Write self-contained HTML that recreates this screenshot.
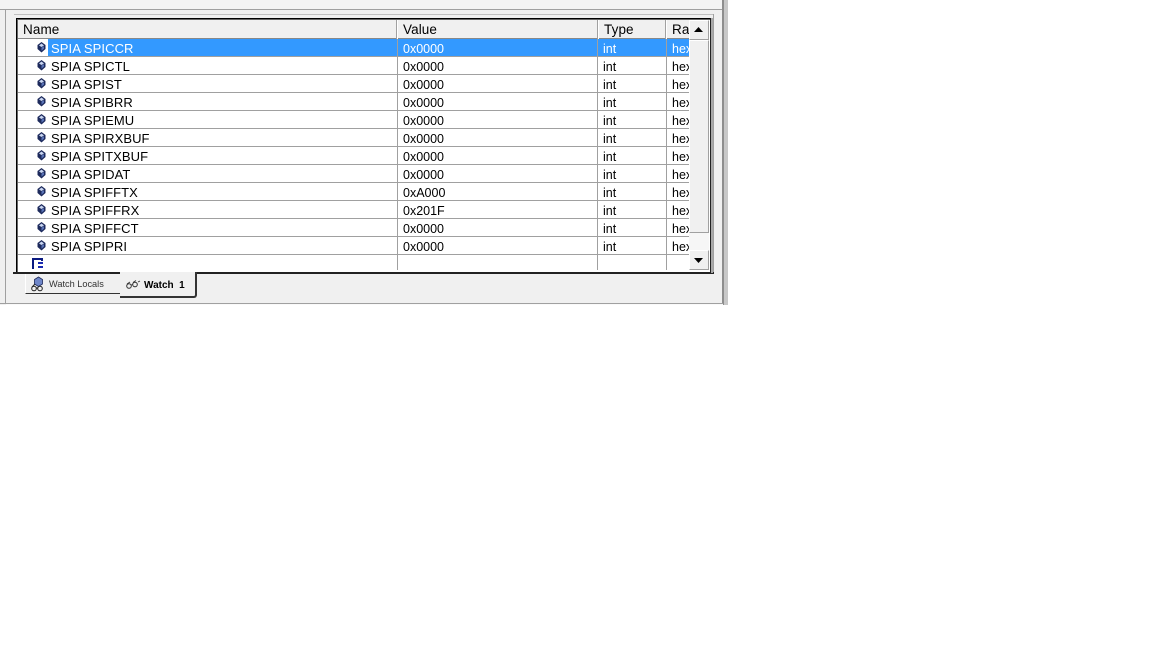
<!DOCTYPE html>
<html><head><meta charset="utf-8">
<style>
html,body{margin:0;padding:0;background:#fff;width:1152px;height:648px;overflow:hidden}
body{position:relative;font-family:"Liberation Sans",sans-serif}
div{position:absolute;box-sizing:border-box}
.t{font-size:13px;line-height:16px;color:#000;white-space:nowrap}
.hd{font-size:13.500px;letter-spacing:.1px}
.n{left:51px;letter-spacing:.08px}
.a{left:403px;font-size:12.5px}
.b{left:603px;font-size:12.5px}
.c{left:672px;font-size:12.5px;width:17px;overflow:hidden}
.w{color:#fff}
.h{height:1px;background:#a0a0a0;left:18px;width:671px}
.v{width:1px;background:#a0a0a0;top:39px;height:231px}
.btn{background:#f0f0f0;border-right:1px solid #a0a0a0;border-bottom:1px solid #a0a0a0;border-top:1px solid #fff;border-left:1px solid #fff}
svg{position:absolute}
</style></head><body>
<div style="left:0;top:0;width:723px;height:305px;background:#f0f0f0"></div>
<div style="left:0;top:0;width:723px;height:9px;background:#f4f4f4"></div>
<div style="left:0;top:9px;width:723px;height:1px;background:#a0a0a0"></div>
<div style="left:5px;top:9px;width:1px;height:295px;background:#a0a0a0"></div>
<div style="left:722px;top:0;width:2px;height:305px;background:#8e8e8e"></div>
<div style="left:724px;top:0;width:4px;height:305px;background:#c8c8c8"></div>
<div style="left:0;top:303px;width:723px;height:1px;background:#a0a0a0"></div>
<div style="left:6px;top:304px;width:717px;height:1px;background:#fafafa"></div>

<div style="left:14px;top:14px;width:700px;height:1px;background:#c0c0c0"></div>
<div style="left:713px;top:14px;width:1px;height:259px;background:#a0a0a0"></div>

<div style="left:16px;top:18px;width:695px;height:255px;background:#fff;border-left:1px solid #000;border-top:1px solid #000"></div>
<div style="left:17px;top:19px;width:694px;height:1px;background:#666"></div>
<div style="left:17px;top:19px;width:1px;height:253px;background:#666"></div>
<div style="left:13px;top:272px;width:701px;height:2px;background:#222"></div>
<div style="left:710px;top:18px;width:1px;height:255px;background:#222"></div>
<div style="left:711px;top:18px;width:2px;height:255px;background:#a8a8a8"></div>

<div style="left:18px;top:20px;width:671px;height:19px;background:#f0f0f0;border-bottom:1px solid #888"></div>
<div style="left:396px;top:20px;width:1px;height:19px;background:#a0a0a0"></div>
<div style="left:397px;top:20px;width:1px;height:19px;background:#fff"></div>
<div style="left:597px;top:20px;width:1px;height:19px;background:#a0a0a0"></div>
<div style="left:598px;top:20px;width:1px;height:19px;background:#fff"></div>
<div style="left:665px;top:20px;width:1px;height:19px;background:#a0a0a0"></div>
<div style="left:666px;top:20px;width:1px;height:19px;background:#fff"></div>
<div class="t hd" style="left:23px;top:22px">Name</div>
<div class="t hd" style="left:403px;top:22px">Value</div>
<div class="t hd" style="left:604px;top:22px">Type</div>
<div class="t hd" style="left:672px;top:22px;width:17px;overflow:hidden">Radix</div>

<div style="left:48px;top:39px;width:641px;height:17px;background:#3399ff"></div>

<div class="h" style="top:56px"></div><div class="h" style="top:74px"></div><div class="h" style="top:92px"></div><div class="h" style="top:110px"></div><div class="h" style="top:128px"></div><div class="h" style="top:146px"></div><div class="h" style="top:164px"></div><div class="h" style="top:182px"></div><div class="h" style="top:200px"></div><div class="h" style="top:218px"></div><div class="h" style="top:236px"></div><div class="h" style="top:254px"></div>
<div class="v" style="left:397px"></div><div class="v" style="left:597px"></div><div class="v" style="left:666px"></div>

<div class="t n w" style="top:41px">SPIA SPICCR</div><div class="t a w" style="top:41px">0x0000</div><div class="t b w" style="top:41px">int</div><div class="t c w" style="top:41px">hex</div>
<div class="t n" style="top:59px">SPIA SPICTL</div><div class="t a" style="top:59px">0x0000</div><div class="t b" style="top:59px">int</div><div class="t c" style="top:59px">hex</div>
<div class="t n" style="top:77px">SPIA SPIST</div><div class="t a" style="top:77px">0x0000</div><div class="t b" style="top:77px">int</div><div class="t c" style="top:77px">hex</div>
<div class="t n" style="top:95px">SPIA SPIBRR</div><div class="t a" style="top:95px">0x0000</div><div class="t b" style="top:95px">int</div><div class="t c" style="top:95px">hex</div>
<div class="t n" style="top:113px">SPIA SPIEMU</div><div class="t a" style="top:113px">0x0000</div><div class="t b" style="top:113px">int</div><div class="t c" style="top:113px">hex</div>
<div class="t n" style="top:131px">SPIA SPIRXBUF</div><div class="t a" style="top:131px">0x0000</div><div class="t b" style="top:131px">int</div><div class="t c" style="top:131px">hex</div>
<div class="t n" style="top:149px">SPIA SPITXBUF</div><div class="t a" style="top:149px">0x0000</div><div class="t b" style="top:149px">int</div><div class="t c" style="top:149px">hex</div>
<div class="t n" style="top:167px">SPIA SPIDAT</div><div class="t a" style="top:167px">0x0000</div><div class="t b" style="top:167px">int</div><div class="t c" style="top:167px">hex</div>
<div class="t n" style="top:185px">SPIA SPIFFTX</div><div class="t a" style="top:185px">0xA000</div><div class="t b" style="top:185px">int</div><div class="t c" style="top:185px">hex</div>
<div class="t n" style="top:203px">SPIA SPIFFRX</div><div class="t a" style="top:203px">0x201F</div><div class="t b" style="top:203px">int</div><div class="t c" style="top:203px">hex</div>
<div class="t n" style="top:221px">SPIA SPIFFCT</div><div class="t a" style="top:221px">0x0000</div><div class="t b" style="top:221px">int</div><div class="t c" style="top:221px">hex</div>
<div class="t n" style="top:239px">SPIA SPIPRI</div><div class="t a" style="top:239px">0x0000</div><div class="t b" style="top:239px">int</div><div class="t c" style="top:239px">hex</div>

<svg width="1152" height="648" style="left:0;top:0">
<defs><g id="d"><path d="M41.500 42l4 3v4l-4 3.500l-4-3.500v-4z" fill="#1d2a5c"/><path d="M41.500 43.500l2.500 2l-2.500 1.500l-2.500-1.500z" fill="#c9d6f2"/><path d="M41.500 47.500l2.500-1.200v2.300l-2.500 2.200z" fill="#5a74b8"/></g></defs>
<use href="#d"/><use href="#d" y="18"/><use href="#d" y="36"/><use href="#d" y="54"/><use href="#d" y="72"/><use href="#d" y="90"/><use href="#d" y="108"/><use href="#d" y="126"/><use href="#d" y="144"/><use href="#d" y="162"/><use href="#d" y="180"/><use href="#d" y="198"/>
<rect x="32" y="258" width="11" height="2" fill="#0a1a80"/>
<rect x="32" y="258" width="2" height="11" fill="#0a1a80"/>
<rect x="41" y="258" width="2" height="3" fill="#0a1a80"/>
<rect x="38" y="262" width="5" height="2" fill="#1a2ab0"/><rect x="38" y="266" width="5" height="2" fill="#1a2ab0"/>
</svg>

<div style="left:689px;top:232px;width:20px;height:18px;background:#f6f6f6"></div>
<div class="btn" style="left:689px;top:20px;width:20px;height:20px"></div>
<div class="btn" style="left:689px;top:40px;width:20px;height:193px"></div>
<div class="btn" style="left:689px;top:250px;width:20px;height:20px"></div>
<svg width="1152" height="648" style="left:0;top:0">
<path d="M694 32h9l-4.500-5z" fill="#000"/>
<path d="M694 258h9l-4.500 5z" fill="#000"/>
</svg>

<div style="left:25px;top:274px;width:96px;height:20px;background:#f0f0f0;border-bottom:1px solid #333;border-right:1px solid #777;border-left:1px solid #fff"></div>
<div class="t" style="left:49px;top:277px;font-size:9.200px;line-height:14px;color:#333">Watch Locals</div>

<div style="left:120px;top:272px;width:77px;height:26px;background:#f0f0f0;border-right:2px solid #333;border-bottom:2px solid #333;border-radius:0 0 3px 0"></div>
<div class="t" style="left:144px;top:279px;font-size:10px;line-height:14px;font-weight:bold">Watch&nbsp; 1</div>

<svg width="1152" height="648" style="left:0;top:0">
<path d="M38.500 277l4 2.500v4.500l-4 2.500l-4-2.500v-4.500z" fill="#6f86c8" stroke="#1d2a5c" stroke-width=".8"/>
<circle cx="34" cy="288.500" r="2.300" fill="none" stroke="#222" stroke-width="1"/>
<circle cx="40" cy="288.500" r="2.300" fill="none" stroke="#222" stroke-width="1"/>
<path d="M36 288l2 0M32 287l3-3" stroke="#222" stroke-width="1" fill="none"/>
<circle cx="129" cy="286" r="2.300" fill="none" stroke="#333" stroke-width="1"/>
<circle cx="135" cy="284.500" r="2.300" fill="none" stroke="#333" stroke-width="1"/>
<path d="M131 285l2-.5M127 284l3-2M133 282.500l3-2M138 282l2-1" stroke="#333" stroke-width=".9" fill="none"/>
</svg>
</body></html>
